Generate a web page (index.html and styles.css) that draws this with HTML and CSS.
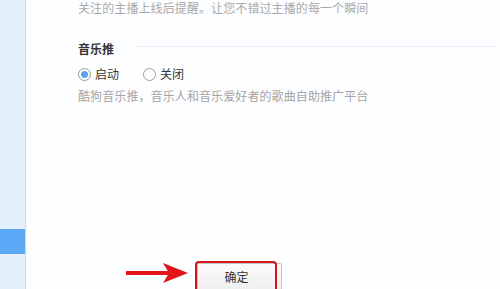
FILE: index.html
```html
<!DOCTYPE html>
<html lang="zh-CN">
<head>
  <meta charset="UTF-8" />
  <meta name="viewport" content="width=device-width, initial-scale=1.0" />
  <title>设置</title>
  <link rel="stylesheet" href="styles.css">
</head>
<body>
  <div class="sidebar">
    <div class="side-item active"></div>
  </div>

  <div class="main">
    <p class="note">关注的主播上线后提醒。让您不错过主播的每一个瞬间</p>

    <div class="section-title">
      <h3>音乐推</h3>
      <span class="rule"></span>
    </div>

    <div class="options">
      <label class="radio"><input type="radio" name="push" checked /><span class="dot"></span>启动</label>
      <label class="radio"><input type="radio" name="push" /><span class="dot"></span>关闭</label>
    </div>
    <p class="note desc">酷狗音乐推，音乐人和音乐爱好者的歌曲自助推广平台</p>

    <div class="footer">
      <svg class="arrow" width="62" height="22" viewBox="0 0 62 22">
        <rect x="0" y="9" width="44" height="4" fill="#e3151b" />
        <path d="M37 1 L62 11 L37 21 L43 11 Z" fill="#e3151b" />
      </svg>
      <button class="btn">确定</button>
    </div>
  </div>
</body>
</html>
```

FILE: styles.css
```css
body {
  font-family: "Noto Sans CJK SC", "Noto Sans", sans-serif;
  font-size: 12px;
  margin: 0;
  display: flex;
  height: 289px;
  overflow: hidden;
  background: #fff;
}
.sidebar {
  width: 25px;
  flex-shrink: 0;
  background: #e4f0fc;
  border-right: 1px solid #cbd8e6;
  padding-top: 229px;
}
.side-item {
  height: 25px;
}
.side-item.active {
  background: #5ba9f6;
}
.main {
  flex: 1;
  display: flex;
  flex-direction: column;
  padding: 1px 4px 0 52px;
  background: #fdfeff;
}
.note {
  margin: 0;
  line-height: 14px;
  color: #a9a9a9;
  letter-spacing: 0.1px;
}
.section-title {
  display: flex;
  align-items: center;
  margin-top: 26px;
  height: 16px;
}
.section-title h3 {
  margin: 0;
  font-size: 12px;
  font-weight: bold;
  color: #333;
  line-height: 16px;
}
.rule {
  flex: 1;
  height: 1px;
  background: #eceff3;
  margin-left: 22px;
  margin-top: -5px;
}
.options {
  display: flex;
  gap: 24px;
  margin-top: 9px;
  height: 16px;
  align-items: center;
}
.radio {
  display: flex;
  align-items: center;
  color: #333;
  line-height: 16px;
}
.radio input {
  display: none;
}
.dot {
  width: 11px;
  height: 11px;
  border: 1px solid #9a9a9a;
  border-radius: 50%;
  background: #fff;
  margin-right: 4px;
  box-sizing: content-box;
  position: relative;
}
.radio input:checked + .dot::after {
  content: "";
  position: absolute;
  left: 2px;
  top: 2px;
  width: 7px;
  height: 7px;
  border-radius: 50%;
  background: #5ba3ea;
}
.desc {
  margin-top: 7px;
  color: #a4a4a4;
}
.footer {
  margin-top: auto;
  display: flex;
  align-items: flex-start;
  padding-left: 48px;
  height: 26px;
}
.arrow {
  margin-top: -1px;
  margin-right: 9px;
}
.btn {
  position: relative;
  width: 85px;
  height: 30px;
  border: 1px solid #c6c6c6;
  border-radius: 2px;
  background: linear-gradient(#fafafa, #eeeeee);
  font-family: inherit;
  font-size: 12px;
  color: #333;
  padding: 0 6px 3px 0;
}
.btn::after {
  content: "";
  position: absolute;
  left: -3px;
  top: -3px;
  width: 78px;
  height: 31px;
  border: 2px solid #d0141c;
  border-radius: 4px;
}
```
